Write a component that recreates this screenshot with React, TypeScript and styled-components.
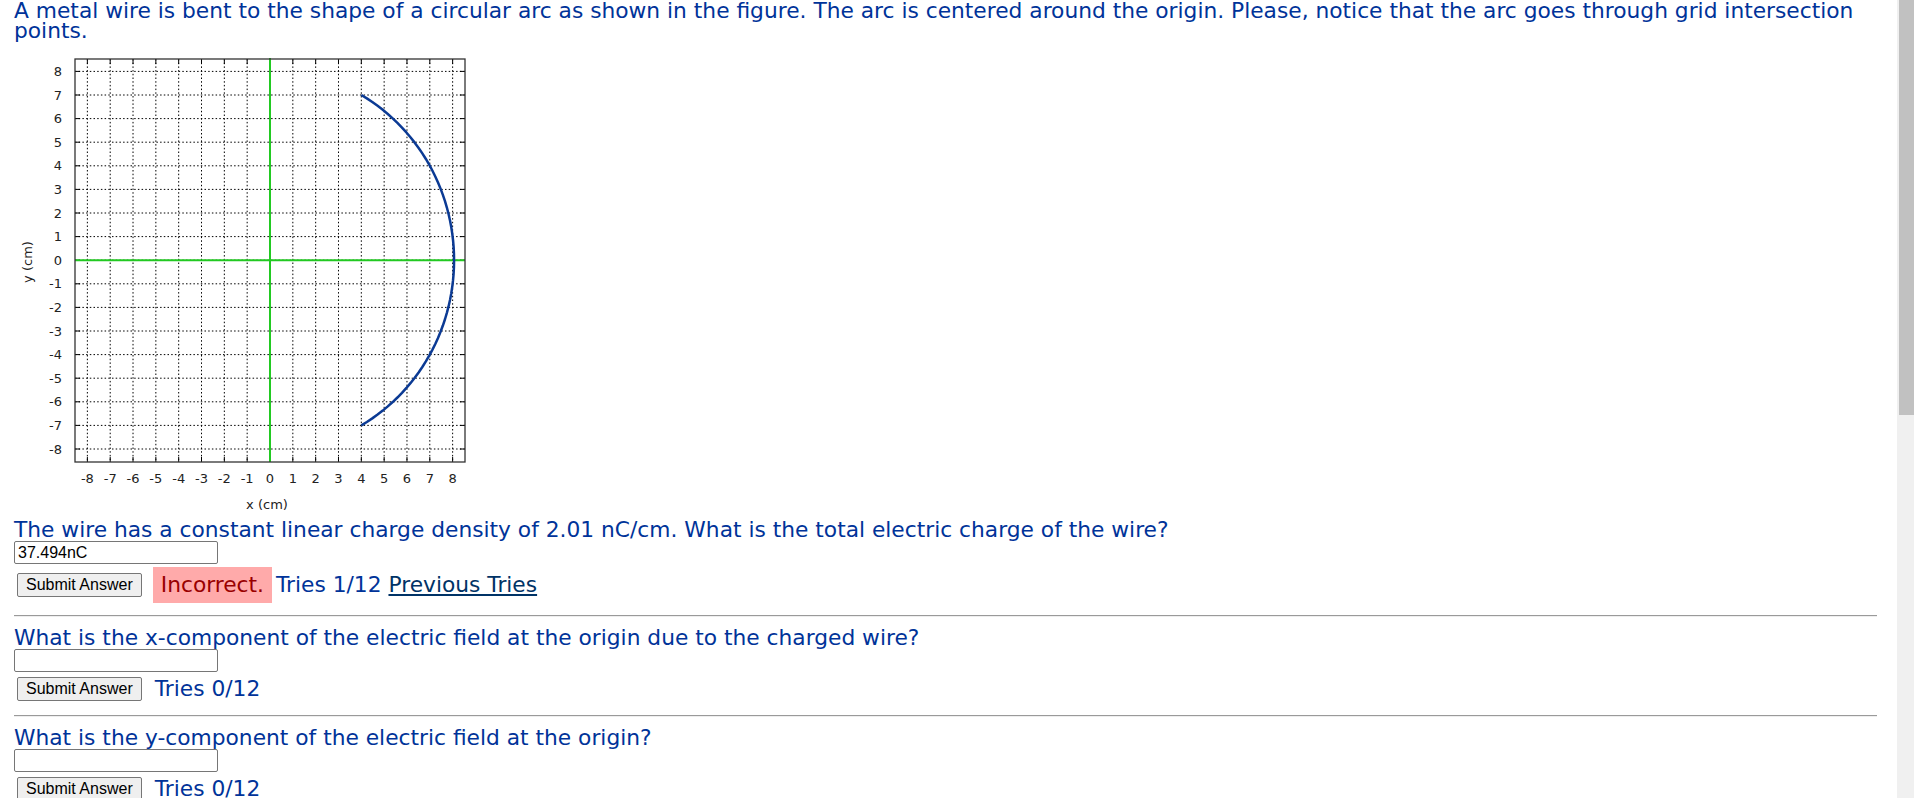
import styled, { createGlobalStyle } from 'styled-components';

const GlobalStyle = createGlobalStyle`
  html, body {
    margin: 0;
    padding: 0;
    background: #ffffff;
    overflow: hidden;
  }
  body {
    font-family: "DejaVu Sans", Verdana, sans-serif;
  }
`;

const Shell = styled.div`
  display: flex;
  height: 100vh;
  overflow: hidden;
`;

const Page = styled.div`
  flex: 1;
  min-width: 0;
  min-height: 1535px;
  padding: 0 20px 0 14px;
  color: #003399;
  font-size: 21.75px;
  line-height: 20px;
`;

const ScrollTrack = styled.div`
  width: 17px;
  flex-shrink: 0;
  box-sizing: border-box;
  padding-left: 2px;
  background: #f0f0f0;
`;

const ScrollThumb = styled.div`
  height: 415px;
  background: #c1c1c1;
`;

const Intro = styled.div`
  margin: 0;
  padding-top: 1px;
  height: 39px;
`;

const FigureBox = styled.svg`
  display: block;
`;

const Part = styled.div`
  display: flex;
  flex-direction: column;
  align-items: flex-start;
`;

const Prompt = styled.div`
  box-sizing: border-box;
  height: 20px;
  padding-top: 1px;
  white-space: nowrap;
`;

const AnswerInput = styled.input`
  box-sizing: border-box;
  width: 204px;
  height: 23px;
  margin: 2px 0 0;
  padding: 0 3px;
  border: 1px solid #767676;
  border-radius: 2px;
  font-family: "Liberation Sans", Arial, sans-serif;
  font-size: 16px;
  color: #000;
  background: #fff;
`;

const SubmitRow = styled.div`
  display: flex;
  align-items: center;
  margin-top: 3px;
`;

const SubmitButton = styled.button`
  box-sizing: border-box;
  height: 24px;
  margin: 2px 0 2px 3px;
  padding: 0 8px;
  border: 1px solid #767676;
  border-radius: 2px;
  background: #efefef;
  color: #000;
  font-family: "Liberation Sans", Arial, sans-serif;
  font-size: 16px;
  line-height: 20px;
`;

const Incorrect = styled.span`
  display: inline-block;
  margin-left: 11px;
  padding: 8px 8px;
  background: #ffaaaa;
  color: #990000;
`;

const Tries = styled.span<{ $afterStatus?: boolean }>`
  margin-left: ${({ $afterStatus }) => ($afterStatus ? '4px' : '13px')};
  white-space: pre;
`;

const PrevLink = styled.a`
  color: #003366;
  text-decoration: underline;
`;

const Rule = styled.hr`
  margin: 12px 0 10px;
  border: 0;
  border-top: 1px solid #9a9a9a;
  border-bottom: 1px solid #eeeeee;
  height: 0;
`;

// plot scale, taken from the reference picture (svg starts at page x 14)
const X0 = 256;
const Y0 = 220.2;
const SX = 22.83;
const SY = 23.6;
const xs = (v: number) => X0 + v * SX;
const ys = (v: number) => Y0 - v * SY;

const BOX = { left: 61, right: 451, top: 19, bottom: 422 };
const TICKS = Array.from({ length: 17 }, (_, i) => i - 8);

const arcPoints = () => {
  const r = Math.sqrt(65);
  const a = Math.atan2(7, 4);
  const pts: string[] = [];
  for (let i = 0; i <= 60; i++) {
    const t = -a + (2 * a * i) / 60;
    pts.push(`${xs(r * Math.cos(t)).toFixed(2)},${ys(r * Math.sin(t)).toFixed(2)}`);
  }
  return pts.join(' ');
};

const ArcFigure = () => (
  <FigureBox width={480} height={479} viewBox="0 0 480 479">
    {TICKS.map((v) => (
      <g key={v} stroke="#000" strokeWidth={1} strokeDasharray="1.5 2.2">
        <line x1={xs(v)} y1={BOX.top} x2={xs(v)} y2={BOX.bottom} />
        <line x1={BOX.left} y1={ys(v)} x2={BOX.right} y2={ys(v)} />
      </g>
    ))}
    {TICKS.map((v) => (
      <g key={`t${v}`} stroke="#000" strokeWidth={1}>
        <line x1={xs(v)} y1={BOX.bottom} x2={xs(v)} y2={BOX.bottom - 5} />
        <line x1={xs(v)} y1={BOX.top} x2={xs(v)} y2={BOX.top + 5} />
        <line x1={BOX.left} y1={ys(v)} x2={BOX.left + 5} y2={ys(v)} />
        <line x1={BOX.right} y1={ys(v)} x2={BOX.right - 5} y2={ys(v)} />
      </g>
    ))}
    <line x1={xs(0)} y1={BOX.top - 1} x2={xs(0)} y2={BOX.bottom} stroke="#22c922" strokeWidth={2} />
    <line x1={BOX.left} y1={ys(0)} x2={BOX.right} y2={ys(0)} stroke="#22c922" strokeWidth={2} />
    <rect
      x={BOX.left}
      y={BOX.top}
      width={BOX.right - BOX.left}
      height={BOX.bottom - BOX.top}
      fill="none"
      stroke="#333"
      strokeWidth={1.3}
    />
    <polyline points={arcPoints()} fill="none" stroke="#0b3a94" strokeWidth={2.5} strokeLinejoin="round" />
    <g fontFamily='"DejaVu Sans", Verdana, sans-serif' fontSize={13} fill="#222">
      {TICKS.map((v) => (
        <text key={`y${v}`} x={48} y={ys(v) + 4.5} textAnchor="end">
          {v}
        </text>
      ))}
      {TICKS.map((v) => (
        <text key={`x${v}`} x={xs(v)} y={443} textAnchor="middle">
          {v}
        </text>
      ))}
      <text x={253} y={469} textAnchor="middle">
        x (cm)
      </text>
      <text x={13} y={222} textAnchor="middle" dominantBaseline="central" transform="rotate(-90 13 222)">
        y (cm)
      </text>
    </g>
  </FigureBox>
);

type QuestionProps = {
  prompt: string;
  value?: string;
  incorrect?: boolean;
  tries: string;
  previous?: boolean;
};

const Question = ({ prompt, value, incorrect, tries, previous }: QuestionProps) => (
  <Part>
    <Prompt>{prompt}</Prompt>
    <AnswerInput type="text" defaultValue={value ?? ''} />
    <SubmitRow>
      <SubmitButton type="button">Submit Answer</SubmitButton>
      {incorrect && <Incorrect>Incorrect.</Incorrect>}
      <Tries $afterStatus={incorrect}>
        {tries}
        {previous && (
          <>
            {' '}
            <PrevLink href="#">Previous Tries</PrevLink>
          </>
        )}
      </Tries>
    </SubmitRow>
  </Part>
);

const App = () => (
  <>
    <GlobalStyle />
    <Shell>
      <Page>
        <Intro>
          A metal wire is bent to the shape of a circular arc as shown in the figure. The arc is centered
          around the origin. Please, notice that the arc goes through grid intersection points.
        </Intro>
        <ArcFigure />
        <Question
          prompt="The wire has a constant linear charge density of 2.01 nC/cm. What is the total electric charge of the wire?"
          value="37.494nC"
          incorrect
          tries="Tries 1/12"
          previous
        />
        <Rule />
        <Question
          prompt="What is the x-component of the electric field at the origin due to the charged wire?"
          tries="Tries 0/12"
        />
        <Rule />
        <Question prompt="What is the y-component of the electric field at the origin?" tries="Tries 0/12" />
      </Page>
      <ScrollTrack>
        <ScrollThumb />
      </ScrollTrack>
    </Shell>
  </>
);

export default App;
